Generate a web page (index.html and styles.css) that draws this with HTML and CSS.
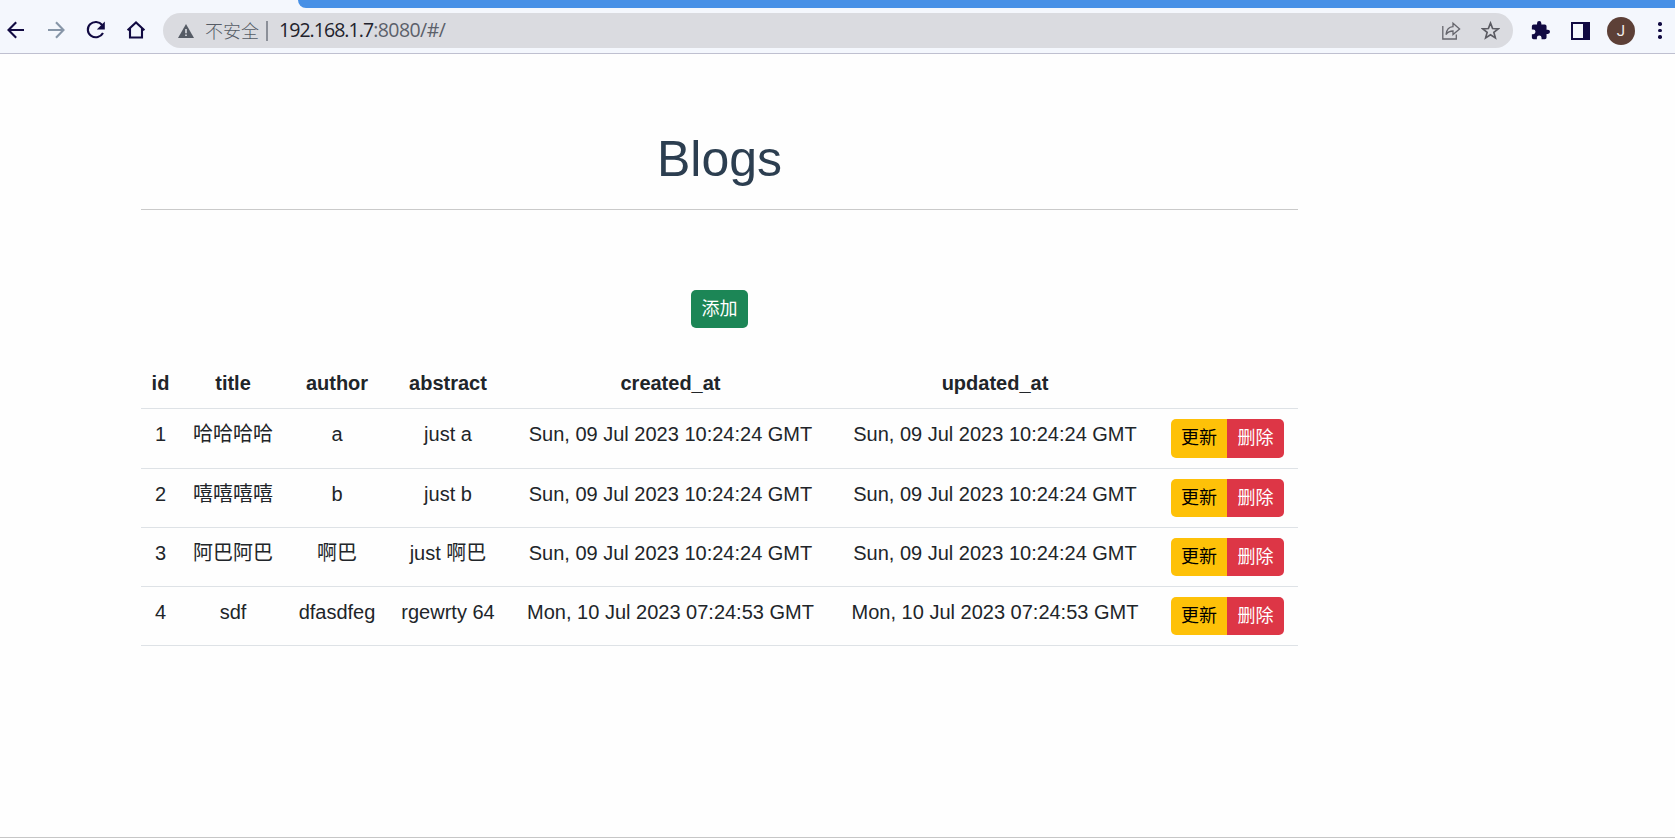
FILE: index.html
```html
<!DOCTYPE html>
<html lang="zh-CN">
<head>
<meta charset="utf-8">
<title>Blogs</title>
<link rel="stylesheet" href="styles.css">
</head>
<body>
<div class="browser">
  <div class="tabstrip"><div class="tabstrip-fill"></div></div>
  <div class="toolbar">
    <svg class="nav-icon" viewBox="0 0 24 24"><path d="M12.200 4.200 4.500 12l7.700 7.800M4.500 12h15.500"/></svg>
    <svg class="nav-icon nav-icon-off" viewBox="0 0 24 24"><path d="M12 4.200 19.500 12 12 19.800M19.500 12H4"/></svg>
    <svg class="nav-icon" viewBox="0 0 24 24"><path d="M18.200 7A8 7.600 0 1 0 19 15"/><path class="solid" d="M20.800 3.600v7.800h-8z"/></svg>
    <svg class="nav-icon nav-icon-last" viewBox="0 0 24 24"><path d="M3.600 12.200 12 4.500l8.400 7.700M6 10.500v9h12v-9"/></svg>
    <div class="omnibox">
      <svg class="warn-icon" viewBox="0 0 16 14"><path fill="#555b65" d="M8 0 16 14H0z"/><path fill="#dadbe0" d="M7.200 5h1.600v4.300H7.200zm0 5.500h1.600V12H7.200z"/></svg>
      <span class="insecure">不安全</span>
      <span class="divider"></span>
      <span class="host">192.168.1.7</span><span class="path">:8080/#/</span>
      <svg class="share-icon" viewBox="0 0 20 20"><path d="M1.800 5v13h13.500v-4.500M5 13.500c.6-5 3-7.500 7-7.800V2.200l6.600 5.800-6.600 5.600V10c-3 0-5.200 1-7 3.500z"/></svg>
      <svg class="star-icon" viewBox="0 0 18 18"><path d="m9 2 2 5.100 5.300.3-4.100 3.400 1.400 5.200L9 13.100 4.400 16l1.400-5.200-4.100-3.400 5.300-.3z"/></svg>
    </div>
    <svg class="ext-icon" viewBox="1 1 22 22"><path d="M20.500 11H19V7a2 2 0 0 0-2-2h-4V3.500a2.500 2.500 0 0 0-5 0V5H4a2 2 0 0 0-2 2v3.800h1.500a2.700 2.700 0 0 1 0 5.400H2V20a2 2 0 0 0 2 2h3.800v-1.500a2.700 2.700 0 0 1 5.400 0V22H17a2 2 0 0 0 2-2v-4h1.500a2.500 2.500 0 0 0 0-5z"/></svg>
    <span class="panel-icon"></span>
    <span class="avatar">J</span>
    <span class="menu"><i></i><i></i><i></i></span>
  </div>
</div>
<main class="page">
  <h1 class="title">Blogs</h1>
  <hr class="rule">
  <div class="actions"><button class="btn btn-add">添加</button></div>
  <table class="table">
    <colgroup><col class="c-id"><col class="c-title"><col class="c-author"><col class="c-abstract"><col class="c-created"><col class="c-updated"><col class="c-ops"></colgroup>
    <thead><tr><th>id</th><th>title</th><th>author</th><th>abstract</th><th>created_at</th><th>updated_at</th><th></th></tr></thead>
    <tbody>
      <tr class="first"><td>1</td><td>哈哈哈哈</td><td>a</td><td>just a</td><td>Sun, 09 Jul 2023 10:24:24 GMT</td><td>Sun, 09 Jul 2023 10:24:24 GMT</td><td><div class="group"><button class="btn btn-edit">更新</button><button class="btn btn-del">删除</button></div></td></tr>
      <tr><td>2</td><td>嘻嘻嘻嘻</td><td>b</td><td>just b</td><td>Sun, 09 Jul 2023 10:24:24 GMT</td><td>Sun, 09 Jul 2023 10:24:24 GMT</td><td><div class="group"><button class="btn btn-edit">更新</button><button class="btn btn-del">删除</button></div></td></tr>
      <tr><td>3</td><td>阿巴阿巴</td><td>啊巴</td><td>just 啊巴</td><td>Sun, 09 Jul 2023 10:24:24 GMT</td><td>Sun, 09 Jul 2023 10:24:24 GMT</td><td><div class="group"><button class="btn btn-edit">更新</button><button class="btn btn-del">删除</button></div></td></tr>
      <tr><td>4</td><td>sdf</td><td>dfasdfeg</td><td>rgewrty 64</td><td>Mon, 10 Jul 2023 07:24:53 GMT</td><td>Mon, 10 Jul 2023 07:24:53 GMT</td><td><div class="group"><button class="btn btn-edit">更新</button><button class="btn btn-del">删除</button></div></td></tr>
    </tbody>
  </table>
</main>
</body>
</html>
```
FILE: styles.css
```css
* { box-sizing: border-box; }
body {
  margin: 0;
  height: 838px;
  overflow: hidden;
  display: flex;
  flex-direction: column;
  background: #fefefe;
  border-bottom: 1px solid #c6c6c6;
  font: 20px/30px "Liberation Sans", "Noto Sans CJK SC", sans-serif;
  color: #212529;
}
.browser { background: #f4f7fd; height: 54px; border-bottom: 1px solid #bfc0d0; }
.tabstrip { height: 8px; padding-left: 298px; }
.tabstrip-fill { height: 8px; background: #4790e6; border-bottom-left-radius: 9px; }
.toolbar { display: flex; align-items: center; height: 45px; padding: 0 13px 0 4px; }
.nav-icon {
  flex: none;
  width: 24px;
  height: 24px;
  margin: 0 16px 1px 0;
  fill: none;
  stroke: #110a42;
  stroke-width: 2.1;
}
.nav-icon .solid { fill: #110a42; stroke: none; }
.nav-icon-off { stroke: #8796a8; }
.nav-icon-last { margin-right: 15px; }
.omnibox {
  display: flex;
  flex: none;
  align-items: center;
  width: 1350px;
  height: 35px;
  padding: 0 13px 0 15px;
  border-radius: 18px;
  background: #dadbe0;
}
.warn-icon { width: 16px; height: 14px; margin-top: 1px; }
.insecure { margin: 0 0 1px 11px; font: 300 18px/26px "Noto Sans CJK SC", sans-serif; color: #555b65; }
.divider { width: 2px; height: 20px; margin: 0 11px 0 7px; background: #8b8f98; }
.host, .path { margin-bottom: 2px; font: 19.5px/26px "Open Sans", "Noto Sans", sans-serif; letter-spacing: -.95px; color: #22222c; }
.path { color: #5b606a; letter-spacing: -.55px; }
.share-icon { width: 20px; height: 20px; margin-left: auto; fill: none; stroke: #65656c; stroke-width: 1.3; }
.star-icon { width: 19px; height: 19px; margin-left: 20px; fill: none; stroke: #5b5b62; stroke-width: 1.6; }
.ext-icon { flex: none; width: 19px; height: 19px; margin: 0 0 1px 18px; fill: #110a42; }
.panel-icon { flex: none; width: 19px; height: 18px; margin-left: 21px; border: 2px solid #110a42; border-right-width: 7px; }
.avatar {
  flex: none;
  width: 28px;
  height: 28px;
  margin-left: 17px;
  border-radius: 50%;
  background: #5d4037;
  color: #f4efed;
  font: 15px/28px Roboto, sans-serif;
  text-align: center;
}
.menu { display: flex; flex-direction: column; gap: 3px; margin-left: auto; }
.menu i { width: 3.600px; height: 3.600px; border-radius: 50%; background: #110a42; }
.page { width: 1157px; margin-left: 141px; padding-top: 75px; }
.title { margin: 0; font-size: 50px; line-height: 60px; font-weight: 400; text-align: center; color: #2c3e50; }
.rule { margin: 20px 0 80px; border: 0; height: 1px; background: #cacaca; }
.actions { display: flex; justify-content: center; margin-bottom: 30px; }
.btn {
  width: 57px;
  height: 38px;
  padding: 0 0 1px;
  border: 0;
  font: 18px/26px "Liberation Sans", "Noto Sans CJK SC", sans-serif;
}
.btn-add { background: #1c8656; color: #fff; border-radius: 5px; }
.table { width: 1157px; table-layout: fixed; border-collapse: separate; border-spacing: 0; text-align: center; }
.table th, .table td { padding: 10px 0; vertical-align: top; border-bottom: 1px solid #dee2e6; white-space: nowrap; line-height: 30px; height: 51px; }
.table td { height: 59px; }
.c-id { width: 39px; }
.c-title { width: 106px; }
.c-author { width: 102px; }
.c-abstract { width: 120px; }
.c-created { width: 325px; }
.c-updated { width: 324px; }
.c-ops { width: 141px; }
.group { display: flex; justify-content: center; }
.btn-edit { width: 56px; background: #fec108; color: #000; border-radius: 5px 0 0 5px; }
.btn-del { background: #dd3646; color: #fff; border-radius: 0 5px 5px 0; }
.first .btn { height: 39px; padding-bottom: 2px; }
```
